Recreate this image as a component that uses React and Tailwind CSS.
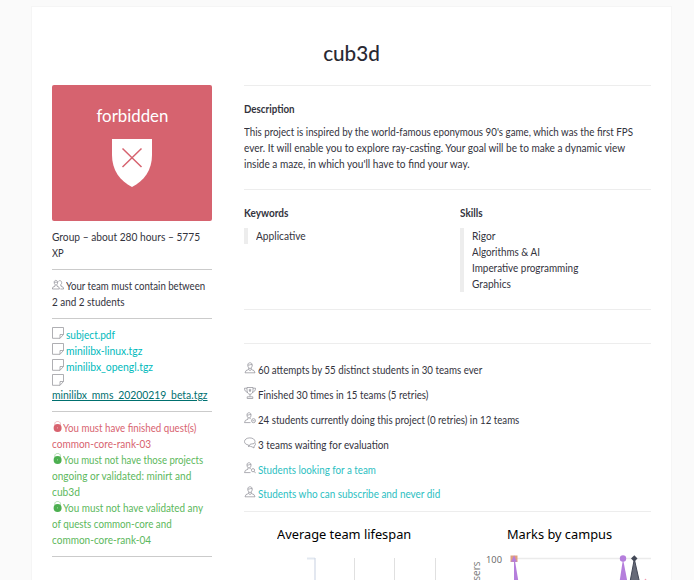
import React from "react";

const Svg = ({ children, className = "" }) => (
  <svg viewBox="0 0 12 12" className={"inline-block h-3 w-3 shrink-0 " + className} fill="none" stroke="#8b8b93" strokeWidth="0.7">
    {children}
  </svg>
);

const User = () => (
  <Svg>
    <path d="M3.8 2.6C4 .2 8 .2 8.2 2.6C8.4 4.8 7.4 6.4 6 6.4S3.600 4.800 3.800 2.600ZM3.900 3C5.500 3.200 6.500 2.800 7 2.200L8.200 3M4.700 6v1.500L2 8.600L1 10.800H11L10 8.600L7.300 7.500V6M4.700 7.600L6 8.600L7.300 7.600" />
  </Svg>
);
const UserMinus = () => (
  <Svg>
    <path d="M3 2.4C3.200 .2 6.800 .2 7 2.500C7.200 4.600 6.300 6 5 6S2.800 4.500 3 2.400ZM3 3C4.500 3.200 5.500 2.800 6 2.200L7 3M3.900 5.800v1.500L1.400 8.400L.5 10.600H6.500M6.200 5.800v1.300" />
    <circle cx="9.500" cy="8.700" r="2" />
    <path d="M8.400 8.700h2.200" />
  </Svg>
);
const UserSearch = () => (
  <Svg>
    <path d="M3 2.4C3.200 .2 6.800 .2 7 2.500C7.200 4.600 6.300 6 5 6S2.800 4.500 3 2.400ZM3 3C4.500 3.200 5.500 2.800 6 2.200L7 3M3.900 5.800v1.500L1.400 8.400L.5 10.600H6.500M6.200 5.800v1.300" />
    <circle cx="9" cy="8.200" r="1.600" />
    <path d="M10.200 9.400L11.600 11.200" />
  </Svg>
);
const Trophy = () => (
  <Svg>
    <path d="M3 .5H9V3.500C9 5.800 7.800 7 6 7.400C4.200 7 3 5.800 3 3.500ZM3 1.200H.500C.5 3.800 1.800 5 3.600 5.200M9 1.200h2.500C11.500 3.800 10.200 5 8.400 5.200M6 7.400v2.200M3.200 11.500V9.800h5.600v1.700Z" />
    <path d="M6 1.800v2.800M4.700 3h2.600M5 4.400L6 3.600L7 4.400" />
  </Svg>
);
const Bubble = () => (
  <Svg>
    <path d="M4.600 8C2.200 7.700.500 6.500.500 4.600C.5 2.400 2.800 .900 5.800 .900S11 2.400 11 4.600C11 5.400 10.600 6.100 10 6.600L6.200 7.200L4.800 10ZM10.800 5.800C11.900 7 11.500 8.600 10 9.200V11L8 9.800L6.200 9.300" />
  </Svg>
);
const Team = () => (
  <Svg>
    <path d="M2.200 2.900C2.400 .800 5.500 .900 5.600 3.100C5.700 4.900 5 6 4 6S2 4.800 2.200 2.900ZM2.300 3.200h3.300M3 6v1.200L.8 8.200L.4 10H7.400L7 8.200L5 7.200V6M6.400 2.400C7.400 .900 9.700 1.700 9.700 3.600C9.700 5 9 6 8 6M9 6v1.200L11.200 8.200L11.600 10H8.400" />
  </Svg>
);
const File = () => (
  <Svg className="mr-0.5 -translate-y-px">
    <path d="M.5 .5H11.500V7.500L8 11.300H.500ZM8 11.300V7.500H11.500" stroke="#9a9a9f" strokeWidth="0.800" />
  </Svg>
);
const Lock = ({ color }) => (
  <svg viewBox="0 0 11 12" className={"inline-block h-3 w-[11px] shrink-0 " + color}>
    <path d="M2.800 4V2.600C2.800 -.2 8.400 -.2 8.400 2.600V4" fill="none" stroke="currentColor" strokeWidth="0.700" opacity="0.600" />
    <circle cx="5.600" cy="6.900" r="4" fill="currentColor" />
    <path d="M5.600 6v1.600" stroke="#fff" strokeWidth="0.700" opacity="0.500" />
  </svg>
);

const Line = ({ icon, children, className = "" }) => (
  <div className="flex h-4 items-center whitespace-nowrap leading-4">
    {icon && <span className="flex -translate-y-px">{icon}</span>}
    <span className={"w-0 origin-left " + className}>{children}</span>
  </div>
);

const Stat = ({ icon, children, className = "" }) => (
  <li className="flex h-[24.8px] items-center whitespace-nowrap">
    <span className="mr-0.5 flex -translate-y-0.5">{icon}</span>
    <span className={"w-0 origin-left " + className}>{children}</span>
  </li>
);

const LeftChart = () => (
  <svg width="204" height="28" className="block">
    <path d="M63 6.500H71" fill="none" stroke="#e2e8f0" strokeWidth="2" />
    <path d="M71 6V30" fill="none" stroke="#d0d8e6" strokeWidth="1.200" />
    <path d="M110.500 6V30M150.500 6V30M191.500 6V30" stroke="#e0e0e0" />
  </svg>
);

const RightChart = () => (
  <svg width="203" height="28" className="block">
    <path d="M69 6.500H203" stroke="#ebebeb" strokeWidth="1.500" />
    <text x="54" y="10.500" textAnchor="end" fontSize="9.300" fill="#666" className="font-['Open_Sans',sans-serif]">100</text>
    <text transform="translate(32 9.500) rotate(-90)" textAnchor="end" fontSize="10" fill="#777" className="font-['Open_Sans',sans-serif]">users</text>
    <rect x="62.500" y="3.500" width="7" height="6.500" fill="#dfa07e" />
    <path d="M66 3L70.500 30H66Z" fill="#b57edc" />
    <path d="M66 3.500L69 9.800H63Z" fill="#b57edc" />
    <path d="M175 7L179.500 30H171.500Z" fill="#b57edc" />
    <circle cx="175" cy="6.500" r="3.200" fill="#b57edc" />
    <path d="M186.300 7L191.500 30H182Z" fill="#666a78" stroke="#434857" />
    <path d="M186.300 3.200L189.500 6.500L186.300 9.800L183 6.500Z" fill="#434857" />
    <circle cx="197.500" cy="27.500" r="0.800" fill="#f29cb0" />
  </svg>
);

export default function App() {
  return (
    <div className="h-[580px] overflow-hidden bg-[#fafafa] pl-[31px] pt-1.5 font-[Lato,sans-serif] text-[11px] leading-4 text-[#33333d]">
      <main className="h-[600px] w-[641px] border border-[#f5f5f5] bg-white px-5 pt-[31px]">
        <h1 className="h-[47px] scale-x-[.94] text-center text-[22px] font-medium leading-[30px] text-[#292933]">cub3d</h1>
        <div className="flex gap-8">
          <aside className="w-40 shrink-0">
            <div className="flex h-[136px] flex-col items-center rounded-[2px] bg-[#d6636f] pt-[18px] text-white">
              <div className="scale-x-[.935] text-[18px] leading-6">forbidden</div>
              <svg width="42" height="50" viewBox="0 0 42 50" className="mt-[11px]">
                <path d="M1 1H41V17C41 32 33 43 21 49C9 43 1 32 1 17Z" fill="#fff" />
                <path d="M11.500 10.500L30.500 29M30.500 10.500L11.500 29" stroke="#d6636f" strokeWidth="1.500" />
              </svg>
            </div>
            <div className="border-b border-[#cbcbcb] py-2">
              <Line className="scale-x-[.927]">Group – about 280 hours – 5775</Line>
              <Line className="scale-x-[.85]">XP</Line>
            </div>
            <div className="border-b border-[#cbcbcb] py-2">
              <Line icon={<Team />} className="ml-0.5 scale-x-[.875]">Your team must contain between</Line>
              <Line className="scale-x-[.9]">2 and 2 students</Line>
            </div>
            <div className="border-b border-[#cbcbcb] py-2 text-[#00babc]">
              <Line icon={<File />} className="scale-x-[.915]">subject.pdf</Line>
              <Line icon={<File />} className="scale-x-[.94]">minilibx-linux.tgz</Line>
              <Line icon={<File />} className="scale-x-[.945]">minilibx_opengl.tgz</Line>
              <div className="flex h-3"><File /></div>
              <Line className="scale-x-[.944] text-[#00706f] underline">minilibx_mms_20200219_beta.tgz</Line>
            </div>
            <div className="border-b border-[#cbcbcb] py-2 text-[#5cb85c]">
              <div className="text-[#d8636f]">
                <Line icon={<Lock color="text-[#d8636f]" />} className="scale-x-[.884]">You must have finished quest(s)</Line>
                <Line className="scale-x-[.912]">common-core-rank-03</Line>
              </div>
              <Line icon={<Lock color="text-[#4caf50]" />} className="scale-x-[.873]">You must not have those projects</Line>
              <Line className="scale-x-[.914]">ongoing or validated: minirt and</Line>
              <Line className="scale-x-[.93]">cub3d</Line>
              <Line icon={<Lock color="text-[#4caf50]" />} className="scale-x-[.9]">You must not have validated any</Line>
              <Line className="scale-x-[.89]">of quests common-core and</Line>
              <Line className="scale-x-[.912]">common-core-rank-04</Line>
            </div>
          </aside>

          <section className="w-[407px] shrink-0">
            <div className="h-[104px] border-t border-[#ededed] pt-[15px]">
              <h2 className="mb-[7px] origin-left scale-x-[.887] font-bold">Description</h2>
              <Line className="scale-x-[.888]">This project is inspired by the world-famous eponymous 90's game, which was the first FPS</Line>
              <Line className="scale-x-[.916]">ever. It will enable you to explore ray-casting. Your goal will be to make a dynamic view</Line>
              <Line className="scale-x-[.916]">inside a maze, in which you'll have to find your way.</Line>
            </div>
            <div className="grid h-[120px] grid-cols-[216px_1fr] border-t border-[#ededed] pt-[15px]">
              <div>
                <h2 className="mb-[7px] origin-left scale-x-[.912] font-bold">Keywords</h2>
                <div className="border-l-4 border-[#ededed] pl-2"><Line className="scale-x-[.925]">Applicative</Line></div>
              </div>
              <div>
                <h2 className="mb-[7px] origin-left scale-x-[.905] font-bold">Skills</h2>
                <div className="border-l-4 border-[#ededed] pl-2">
                  <Line className="scale-x-[.925]">Rigor</Line>
                  <Line className="scale-x-[.893]">Algorithms &amp; AI</Line>
                  <Line className="scale-x-[.9]">Imperative programming</Line>
                  <Line className="scale-x-[.918]">Graphics</Line>
                </div>
              </div>
            </div>
            <div className="h-[34px] border-t border-[#ededed]" />
            <ul className="h-[168px] border-t border-[#ededed] pt-3.5">
              <Stat icon={<User />} className="scale-x-[.884]">60 attempts by 55 distinct students in 30 teams ever</Stat>
              <Stat icon={<Trophy />} className="scale-x-[.885]">Finished 30 times in 15 teams (5 retries)</Stat>
              <Stat icon={<UserMinus />} className="scale-x-[.88]">24 students currently doing this project (0 retries) in 12 teams</Stat>
              <Stat icon={<Bubble />} className="scale-x-[.9]">3 teams waiting for evaluation</Stat>
              <Stat icon={<UserSearch />} className="scale-x-[.891] text-[#2cc0c2]">Students looking for a team</Stat>
              <Stat icon={<User />} className="scale-x-[.9] text-[#2cc0c2]">Students who can subscribe and never did</Stat>
            </ul>
            <div className="flex border-t border-[#ededed] pt-3">
              <div className="w-[204px]">
                <h3 className="h-7 origin-[33px] scale-x-[.985] pl-[33px] font-['Noto_Sans',sans-serif] text-[13px] leading-5 text-black">Average team lifespan</h3>
                <LeftChart />
              </div>
              <div className="w-[203px]">
                <h3 className="h-7 origin-[59px] scale-x-[.985] pl-[59px] font-['Noto_Sans',sans-serif] text-[13px] leading-5 text-black">Marks by campus</h3>
                <RightChart />
              </div>
            </div>
          </section>
        </div>
      </main>
    </div>
  );
}
